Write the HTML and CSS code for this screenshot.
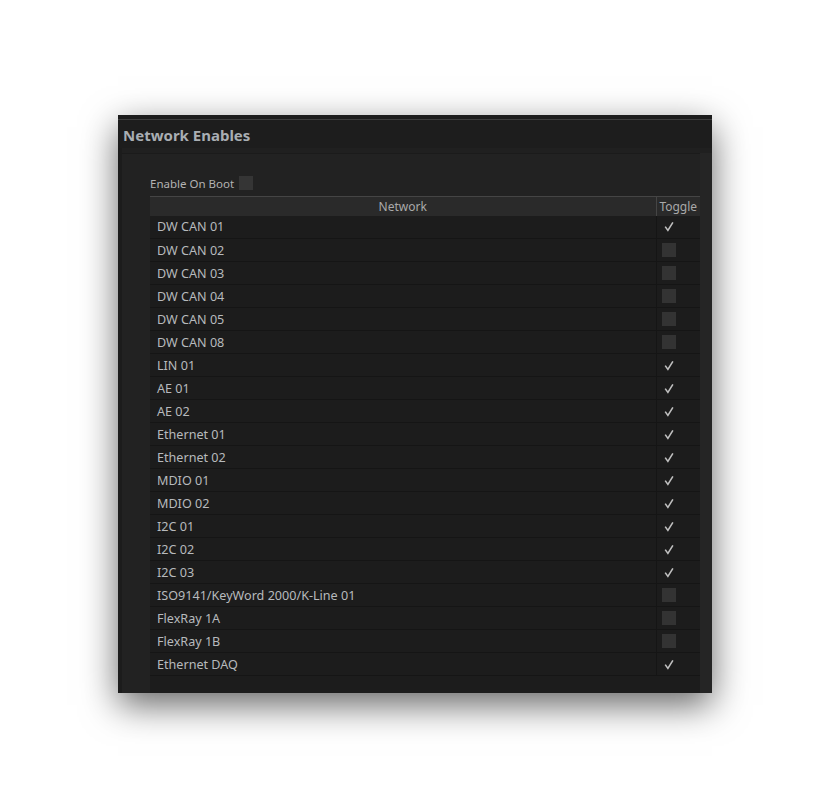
FILE: index.html
```html
<!DOCTYPE html>
<html lang="en">
<head>
    <meta charset="UTF-8">
    <title>Network Enables</title>
    <link rel="stylesheet" href="styles.css">
</head>
<body>
    <div class="panel">
        <div class="panel-title">Network Enables</div>
        <div class="panel-body">
            <div class="content">
                <div class="boot-row">
                    <span>Enable On Boot</span>
                    <span class="box"></span>
                </div>
                <div class="table-wrap">
                    <table class="net-table">
                        <thead>
                            <tr><th class="col-name">Network</th><th class="col-toggle">Toggle</th></tr>
                        </thead>
                        <tbody id="rows"></tbody>
                    </table>
                </div>
            </div>
            <div class="scroll-strip"></div>
        </div>
    </div>

    <script>
        // name, enabled
        const networks = [
            ['DW CAN 01', true],
            ['DW CAN 02', false],
            ['DW CAN 03', false],
            ['DW CAN 04', false],
            ['DW CAN 05', false],
            ['DW CAN 08', false],
            ['LIN 01', true],
            ['AE 01', true],
            ['AE 02', true],
            ['Ethernet 01', true],
            ['Ethernet 02', true],
            ['MDIO 01', true],
            ['MDIO 02', true],
            ['I2C 01', true],
            ['I2C 02', true],
            ['I2C 03', true],
            ['ISO9141/KeyWord 2000/K-Line 01', false],
            ['FlexRay 1A', false],
            ['FlexRay 1B', false],
            ['Ethernet DAQ', true]
        ];

        const check = '<svg class="tick" width="10" height="11" viewBox="0 0 10 11"><path d="M1.2 5.6 L3.9 9.4 L8.9 1.4" fill="none" stroke="#c0c0c0" stroke-width="1.6"/></svg>';

        const tbody = document.getElementById('rows');
        networks.forEach(([name, on]) => {
            const tr = document.createElement('tr');
            tr.innerHTML = `
                <td class="col-name">${name}</td>
                <td class="col-toggle">${on ? check : '<span class="box"></span>'}</td>
            `;
            tbody.appendChild(tr);
        });
    </script>
</body>
</html>
```

FILE: styles.css
```css
* {
    margin: 0;
    padding: 0;
    box-sizing: border-box;
}

html, body {
    background: #ffffff;
}

body {
    min-height: 809px;
    padding: 115px 0 0 118px;
    font-family: "Noto Sans", "Open Sans", sans-serif;
}

.panel {
    width: 594px;
    height: 578px;
    padding-top: 4px;
    background: #1c1c1c;
    box-shadow: 0 12px 34px rgba(0, 0, 0, 0.6);
    display: flex;
    flex-direction: column;
}

.panel-title {
    height: 29px;
    border-top: 1px solid #3d3d3d;
    background: #1d1d1d;
    padding: 5px 0 0 5px;
    font-size: 15px;
    font-weight: bold;
    color: #a9aeb3;
}

.panel-body {
    flex: 1;
    display: flex;
    margin-left: 4px;
    background: #222222;
    border-top: 5px solid #202020;
    min-height: 0;
}

.content {
    flex: 1;
    display: flex;
    flex-direction: column;
    padding: 0 0 0 28px;
    border-top: 1px solid #1b1b1b;
}

.scroll-strip {
    width: 12px;
    background: #252525;
}

.boot-row {
    height: 42px;
    display: flex;
    align-items: center;
    gap: 5px;
    padding-top: 17px;
    padding-bottom: 1px;
    font-size: 11.5px;
    color: #b3b3b3;
}

.box {
    display: inline-block;
    width: 14px;
    height: 14px;
    background: #353535;
}

.table-wrap {
    flex: 1;
    background: #1c1c1c;
}

.net-table {
    width: 100%;
    border-collapse: collapse;
    font-size: 12.6px;
    color: #b7babd;
}

.net-table th {
    height: 19px;
    background: #2a2a2a;
    border-top: 1px solid #454545;
    font-weight: normal;
    font-size: 12px;
    color: #a9a9a9;
    text-align: center;
    padding: 0;
}

.net-table th.col-toggle {
    border-left: 1px solid #454545;
    width: 44px;
}

.net-table td {
    height: 23px;
    border-bottom: 1px solid #151515;
    padding: 0;
}

.net-table td.col-name {
    padding-left: 7px;
}

.net-table td.col-toggle {
    border-left: 1px solid #151515;
    width: 44px;
    padding-left: 5px;
    text-align: left;
    line-height: 0;
}

.net-table td .box {
    vertical-align: middle;
    background: #333333;
}

.tick {
    vertical-align: middle;
    margin-left: 2px;
}
```
